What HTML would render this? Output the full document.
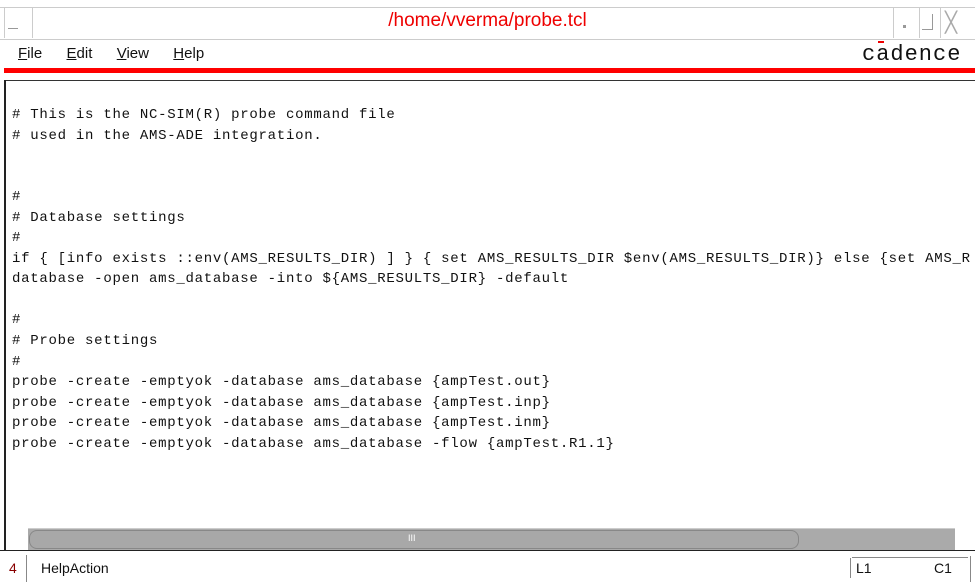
<!DOCTYPE html>
<html><head><style>
body{margin:0;width:975px;height:582px;background:#fff;position:relative;overflow:hidden;font-family:"Liberation Sans",sans-serif}
.a{position:absolute}
pre{margin:0;font-family:"Liberation Mono",monospace;font-size:14px;letter-spacing:0.73px;line-height:20.55px;color:#111}
</style></head><body>
<div class="a" style="left:0;top:7px;width:975px;height:31px;border-top:1px solid #ccc;border-bottom:1px solid #ccc"></div>
<div class="a" style="left:4px;top:8px;width:27px;height:30px;border-right:1px solid #ccc;border-left:1px solid #ccc"></div>
<div class="a" style="left:8px;top:28px;width:10px;height:1px;background:#999"></div>
<div class="a" style="left:0;top:10px;width:975px;text-align:center;color:#e00;font-size:19px">/home/vverma/probe.tcl</div>
<div class="a" style="left:893px;top:8px;width:25px;height:30px;border-left:1px solid #ccc;border-right:1px solid #ccc"></div>
<div class="a" style="left:903px;top:25px;width:3px;height:3px;background:#999"></div>
<div class="a" style="left:922px;top:14px;width:10px;height:15px;border-right:1px solid #999;border-bottom:1px solid #999"></div>
<div class="a" style="left:940px;top:8px;width:1px;height:30px;background:#ccc"></div>
<div class="a" style="left:945px;top:10px;color:#aaa;font-size:20px">╳</div>
<div class="a" style="left:18px;top:45px;font-size:15px;color:#111;word-spacing:8px"><u>F</u>ile &nbsp;<u>E</u>dit &nbsp;<u>V</u>iew &nbsp;<u>H</u>elp</div>
<div class="a" style="left:862px;top:42px;font-family:'Liberation Mono',monospace;font-size:22px;letter-spacing:1px;color:#111">cadence</div>
<div class="a" style="left:878px;top:41px;width:6px;height:2px;background:#e00"></div>
<div class="a" style="left:4px;top:68px;width:971px;height:5px;background:#f00"></div>
<div class="a" style="left:4px;top:80px;width:971px;height:1px;background:#333"></div>
<div class="a" style="left:4px;top:80px;width:2px;height:470px;background:#222"></div>
<pre class="a" style="left:12px;top:105px">
# This is the NC-SIM(R) probe command file
# used in the AMS-ADE integration.


#
# Database settings
#
if { [info exists ::env(AMS_RESULTS_DIR) ] } { set AMS_RESULTS_DIR $env(AMS_RESULTS_DIR)} else {set AMS_R
database -open ams_database -into ${AMS_RESULTS_DIR} -default

#
# Probe settings
#
probe -create -emptyok -database ams_database {ampTest.out}
probe -create -emptyok -database ams_database {ampTest.inp}
probe -create -emptyok -database ams_database {ampTest.inm}
probe -create -emptyok -database ams_database -flow {ampTest.R1.1}</pre>
<div class="a" style="left:6px;top:528px;width:966px;height:22px;background:#aaa;border-top:1px solid #ccc"></div>
<div class="a" style="left:6px;top:528px;width:22px;height:22px;background:#fff"></div>
<div class="a" style="left:955px;top:528px;width:20px;height:22px;background:#fff"></div>
<div class="a" style="left:29px;top:530px;width:768px;height:17px;background:#a8a8a8;border:1px solid #888;border-radius:8px"></div>
<div class="a" style="left:408px;top:533px;font-size:9px;color:#fff">III</div>
<div class="a" style="left:0;top:550px;width:975px;height:1px;background:#222"></div>
<div class="a" style="left:9px;top:560px;font-size:14px;color:#800">4</div>
<div class="a" style="left:26px;top:555px;width:1px;height:27px;background:#888"></div>
<div class="a" style="left:41px;top:560px;font-size:14px;color:#111">HelpAction</div>
<div class="a" style="left:850px;top:558px;width:1px;height:20px;background:#888"></div>
<div class="a" style="left:852px;top:557px;width:116px;height:1px;background:#888"></div>
<div class="a" style="left:856px;top:560px;font-size:14px;color:#111">L1</div>
<div class="a" style="left:934px;top:560px;font-size:14px;color:#111">C1</div>
<div class="a" style="left:970px;top:556px;width:1px;height:26px;background:#888"></div>
</body></html>
